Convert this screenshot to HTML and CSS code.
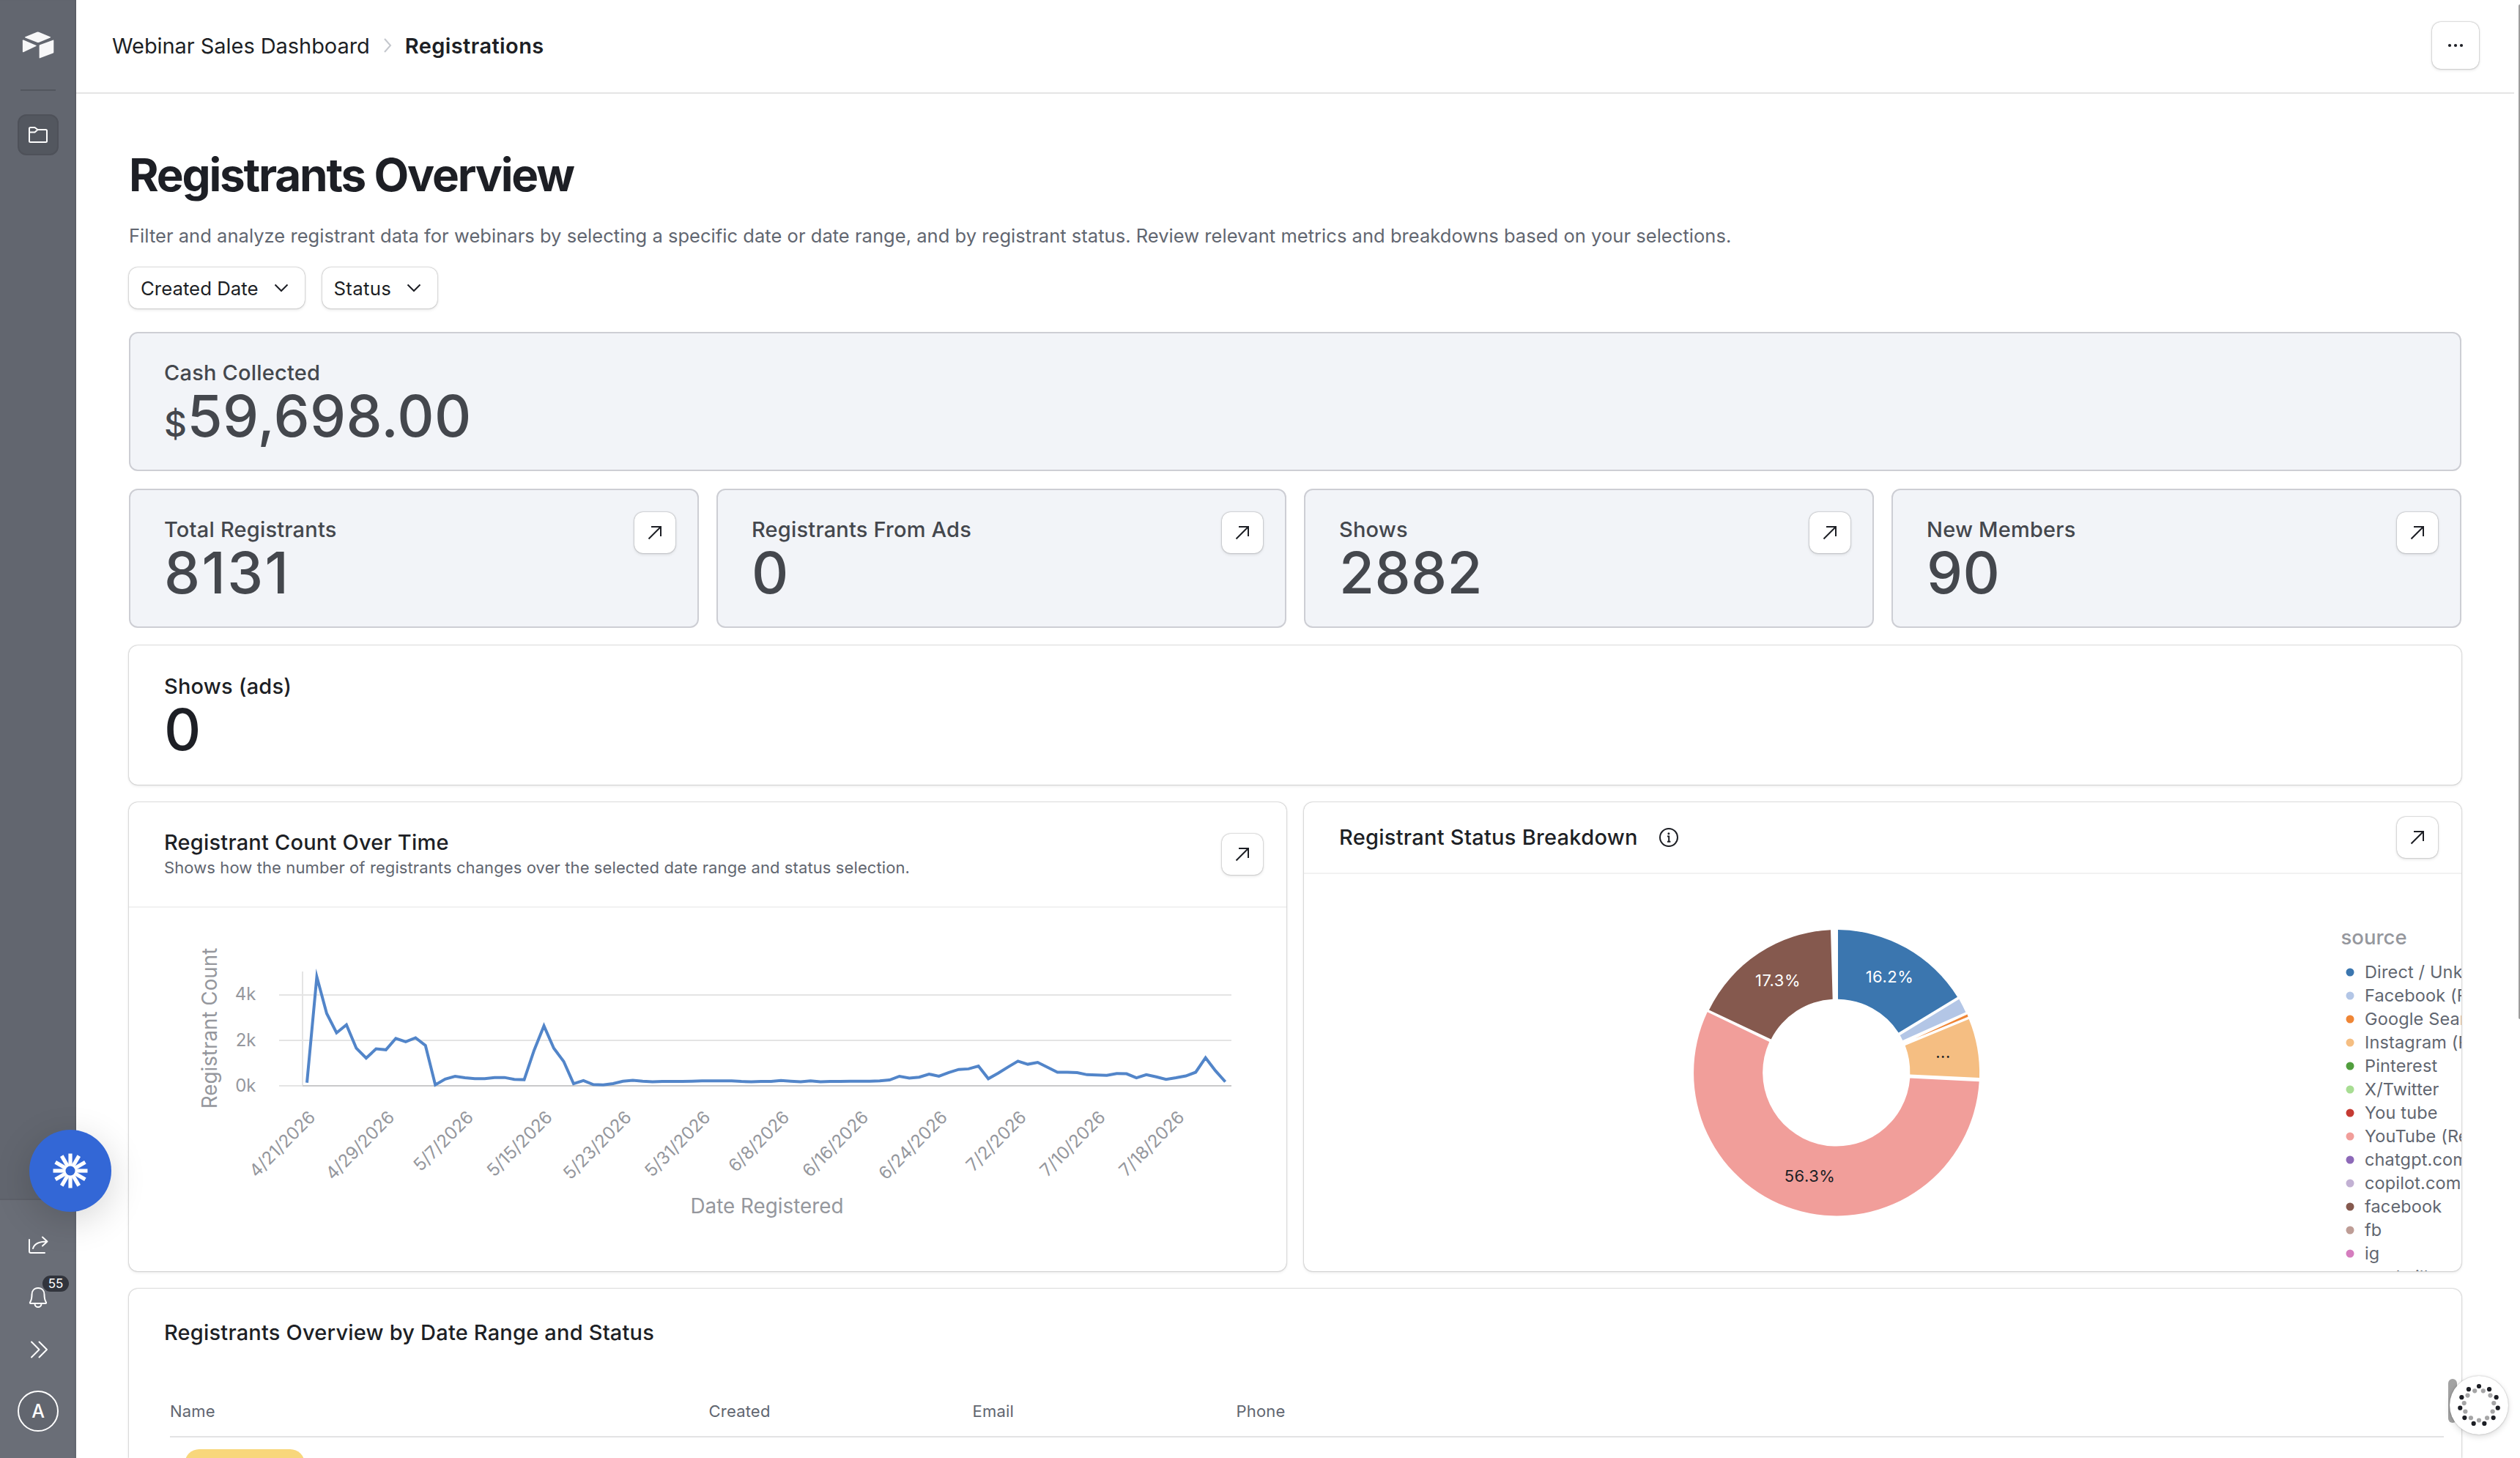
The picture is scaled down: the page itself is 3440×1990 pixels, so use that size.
FILE: index.html
```
<!DOCTYPE html>
<html lang="en">
  <head>
    <meta charset="UTF-8" />
    <meta name="viewport" content="width=device-width, initial-scale=1.0" />
    <title>Registrations - Webinar Sales Dashboard</title>
    <link rel="stylesheet" href="styles.css">
  </head>
  <body>
    <!-- Icons shared by several buttons -->
    <svg class="sprite">
      <symbol id="icon-expand" viewBox="0 0 20 20">
        <path d="M1.5 18.5 L17.5 2.5 M5 2 H18 V15" />
      </symbol>
      <symbol id="icon-chevron" viewBox="0 0 20 12">
        <path d="M1.5 1.5 L10 10 L18.5 1.5" />
      </symbol>
    </svg>

    <aside class="sidebar">
      <div class="sidebar-top">
        <svg class="logo" viewBox="0 0 44 38">
          <path d="M20.4 .7 L4.5 7.2 q-1.2 .6 0 1.2 L20.5 14.7 q1.5 .6 3 0 L38.6 8.4 q1.2-.6 0-1.2 L23 .7 q-1.3-.5-2.6 0z" />
          <path d="M23.6 19.2 V35.6 q0 1.2 1.1 .7 L42.6 29.4 q.7-.3 .7-1 V12.4 q0-1.1-1.1-.7 L24.3 18.3 q-.7 .3-.7 .9z" />
          <path d="M19.4 19 L2 11.6 Q.9 11.2 .9 12.3 V27.6 q0 1 1 .6 L19.3 20 q1-.5 .1-1z" />
        </svg>
        <div class="sidebar-divider"></div>
        <button class="folder-btn">
          <svg class="line-icon" width="28" height="24" viewBox="0 0 28 24">
            <path d="M2 20.5 V3.5 Q2 2 3.5 2 H9.5 L13.5 5 H24.5 Q26 5 26 6.5 V20.5 Q26 22 24.5 22 H3.5 Q2 22 2 20.5z M2 8.5 H9.5 L13.5 5" />
          </svg>
        </button>
      </div>

      <div class="sidebar-bottom">
        <svg class="line-icon" width="28" height="26" viewBox="0 0 28 26">
          <path d="M2 6 V22 Q2 24 4 24 H23 M7 18 C9 11 15 8.5 26 8.5 M20 2.5 L26.5 8.5 L20 14.5" />
        </svg>
        <div class="bell">
          <svg class="line-icon" width="26" height="30" viewBox="0 0 26 30">
            <path d="M13 2 C7.5 2 4.5 6 4.5 11 C4.5 17 3 20 2 21.5 Q1.5 23 3 23 H23 Q24.5 23 24 21.5 C23 20 21.5 17 21.5 11 C21.5 6 18.5 2 13 2z M8.5 23.5 a4.5 4.5 0 0 0 9 0" />
          </svg>
          <span class="badge">55</span>
        </div>
        <svg class="line-icon double-chevron" width="26" height="26" viewBox="0 0 26 26">
          <path d="M3 2.5 L13.5 13 L3 23.5 M13.5 2.5 L24 13 L13.5 23.5" />
        </svg>
        <div class="avatar">A</div>
      </div>
    </aside>

    <div class="page">
      <header class="topbar">
        <div class="breadcrumb">
          <span>Webinar Sales Dashboard</span>
          <svg width="12" height="20" viewBox="0 0 12 20"><path d="M2 1 L10 10 L2 19" /></svg>
          <strong>Registrations</strong>
        </div>
        <button class="icon-btn more-btn">
          <svg width="24" height="6" viewBox="0 0 24 6">
            <circle cx="4" cy="3" r="2.1" /><circle cx="12" cy="3" r="2.1" /><circle cx="20" cy="3" r="2.1" />
          </svg>
        </button>
      </header>

      <main class="content">
        <h1>Registrants Overview</h1>
        <p class="intro">Filter and analyze registrant data for webinars by selecting a specific date or date range, and by registrant status. Review relevant metrics and breakdowns based on your selections.</p>

        <div class="filters">
          <button class="filter-btn">Created Date <svg><use href="#icon-chevron" /></svg></button>
          <button class="filter-btn status">Status <svg><use href="#icon-chevron" /></svg></button>
        </div>

        <div class="cards">
          <section class="card kpi tinted full">
            <div>
              <h2>Cash Collected</h2>
              <div class="number"><span class="currency">$</span>59,698.00</div>
            </div>
          </section>

          <section class="card kpi tinted">
            <div>
              <h2>Total Registrants</h2>
              <div class="number wide">8131</div>
            </div>
            <button class="icon-btn"><svg><use href="#icon-expand" /></svg></button>
          </section>
          <section class="card kpi tinted">
            <div>
              <h2>Registrants From Ads</h2>
              <div class="number">0</div>
            </div>
            <button class="icon-btn"><svg><use href="#icon-expand" /></svg></button>
          </section>
          <section class="card kpi tinted">
            <div>
              <h2>Shows</h2>
              <div class="number">2882</div>
            </div>
            <button class="icon-btn"><svg><use href="#icon-expand" /></svg></button>
          </section>
          <section class="card kpi tinted">
            <div>
              <h2>New Members</h2>
              <div class="number">90</div>
            </div>
            <button class="icon-btn"><svg><use href="#icon-expand" /></svg></button>
          </section>

          <section class="card kpi full">
            <div>
              <h2>Shows (ads)</h2>
              <div class="number">0</div>
            </div>
          </section>

          <section class="card chart half">
            <div class="chart-head tall">
              <div>
                <h2>Registrant Count Over Time</h2>
                <p>Shows how the number of registrants changes over the selected date range and status selection.</p>
              </div>
              <button class="icon-btn"><svg><use href="#icon-expand" /></svg></button>
            </div>
            <svg width="1580" height="496" viewBox="0 0 1580 496">
              <path class="grid" d="M205 119 H1505 M205 181 H1505 M205 243 H237 M237 87 V243" />
              <path class="axis" d="M237 243 H1505" />
              <text class="tick" x="173.5" y="126" text-anchor="end">4k</text>
              <text class="tick" x="173.5" y="188.5" text-anchor="end">2k</text>
              <text class="tick" x="173.5" y="250.5" text-anchor="end">0k</text>
              <g id="date-labels"></g>
              <polyline id="count-line" points="" />
              <text class="axis-title" transform="translate(119.5 164.5) rotate(-90)" text-anchor="middle">Registrant Count</text>
              <text class="axis-title" x="871" y="417" text-anchor="middle">Date Registered</text>
            </svg>
          </section>

          <section class="card chart half">
            <div class="chart-head">
              <div class="with-info">
                <h2>Registrant Status Breakdown</h2>
                <svg class="info" width="28" height="28" viewBox="0 0 28 28">
                  <circle cx="14" cy="14" r="12" />
                  <path d="M12 12.5 H14.2 V19.5 M12 19.7 H16.4" />
                  <circle class="dot" cx="13.9" cy="8.7" r="1.5" />
                </svg>
              </div>
              <button class="icon-btn"><svg><use href="#icon-expand" /></svg></button>
            </div>
            <svg width="1580" height="542" viewBox="0 0 1580 542">
              <path fill="#3b76af" d="M729 76 A195 195 0 0 1 892 167.8 L811.7 216.4 A100.7 100.7 0 0 0 729 170.7z" />
              <path fill="#b3c6e6" d="M894.3 170.7 A195 195 0 0 1 903.3 188.6 L817.3 227 A100.7 100.7 0 0 0 813.7 220z" />
              <path fill="#ef8636" d="M905.5 191.5 L906.6 194.8 L834 224.6z" />
              <path fill="#f5be82" d="M907.7 198 A195 195 0 0 1 922 278 L827.3 273.5 A100.7 100.7 0 0 0 820.7 234z" />
              <path fill="#f19e9a" d="M921.7 283.3 A195 195 0 1 1 550.7 188.2 L635.3 229 A100.7 100.7 0 1 0 827.3 278.4z" />
              <path fill="#85594e" d="M553 185.4 A195 195 0 0 1 719 76.2 L721.7 170.7 A100.7 100.7 0 0 0 637.7 225.4z" />
              <g class="slice-labels" text-anchor="middle">
                <text class="light" x="799.5" y="147.5">16.2%</text>
                <text class="light" x="647" y="152.5">17.3%</text>
                <text x="690.5" y="419.5">56.3%</text>
                <text x="872.5" y="251">...</text>
              </g>
              <text class="legend-title" x="1415.5" y="95.5">source</text>
              <g id="legend"></g>
            </svg>
          </section>

          <section class="card table-card full">
            <h2>Registrants Overview by Date Range and Status</h2>
            <div class="table-head">
              <span>Name</span>
              <span>Created</span>
              <span>Email</span>
              <span>Phone</span>
            </div>
            <div class="pill"></div>
          </section>
        </div>
      </main>
    </div>

    <div class="page-scroll"></div>
    <div class="table-scroll"></div>

    <!-- Floating widgets -->
    <div class="assistant">
      <svg id="burst" width="112" height="112" viewBox="-56 -56 112 112"></svg>
    </div>
    <div class="help">
      <svg id="help-dots" width="80" height="80" viewBox="-40 -40 80 80"></svg>
    </div>

    <script src="charts.js"></script>
  </body>
</html>
```
FILE: styles.css
```
/* General */
* {
  box-sizing: border-box;
}

body {
  margin: 0;
  height: 100vh;
  overflow: hidden;
  display: flex;
  background: #fff;
  color: #1d1f25;
  font-family: Inter, "Liberation Sans", sans-serif;
}

h1,
h2,
p {
  margin: 0;
}

button {
  font: inherit;
  color: inherit;
  border: none;
  padding: 0;
  background: #fff;
  cursor: pointer;
}

svg {
  display: block;
  flex: none;
}

.sprite {
  position: absolute;
  width: 0;
  height: 0;
}

/* Sidebar */
.sidebar {
  width: 104px;
  flex: none;
  display: flex;
  flex-direction: column;
  justify-content: space-between;
  background: #62666f;
  box-shadow: inset -2px 0 2px -1px rgba(0, 0, 0, 0.15);
}

.sidebar-top,
.sidebar-bottom {
  display: flex;
  flex-direction: column;
  align-items: center;
}

.sidebar-top {
  padding-top: 43px;
}

.logo {
  width: 44px;
  height: 38px;
  fill: #f7f7f8;
}

.sidebar-divider {
  width: 48px;
  height: 2px;
  margin: 41px 0 32px;
  background: #53565e;
}

.folder-btn {
  width: 56px;
  height: 56px;
  display: flex;
  align-items: center;
  justify-content: center;
  background: #53575f;
  border: 2px solid #4e5159;
  border-radius: 12px;
}

.line-icon {
  fill: none;
  stroke: #fff;
  stroke-width: 2;
  stroke-linecap: round;
  stroke-linejoin: round;
}

.sidebar-bottom {
  height: 354px;
  padding-top: 48px;
  background: linear-gradient(90deg, #6a6e77 100px, #62666f);
  border-top: 2px solid #5d6069;
}

.bell {
  position: relative;
  margin-top: 44px;
}

.badge {
  position: absolute;
  left: 19px;
  top: -15px;
  width: 36px;
  height: 22px;
  line-height: 22px;
  border-radius: 11px;
  background: #31343c;
  color: #fff;
  font-size: 17px;
  text-align: center;
}

.double-chevron {
  margin: 43px -2px 0 0;
}

.avatar {
  width: 56px;
  height: 56px;
  margin-top: 43px;
  line-height: 52px;
  border: 2px solid #fff;
  border-radius: 50%;
  background: #62666f;
  color: #fff;
  font-size: 25px;
  font-weight: 500;
  text-align: center;
}

/* Top bar */
.page {
  flex: 1;
  min-width: 0;
}

.topbar {
  height: 128px;
  margin-right: 8px;
  padding: 0 48px 2px 49px;
  display: flex;
  align-items: center;
  justify-content: space-between;
  border-bottom: 2px solid #e5e5e5;
}

.breadcrumb {
  display: flex;
  align-items: center;
  font-size: 29px;
  letter-spacing: -0.06px;
}

.breadcrumb svg {
  margin: 0 18px;
  fill: none;
  stroke: #c4c7cd;
  stroke-width: 2;
}

.breadcrumb strong {
  font-weight: 600;
  letter-spacing: 0.4px;
}

.icon-btn {
  width: 56px;
  height: 56px;
  flex: none;
  display: flex;
  align-items: center;
  justify-content: center;
  border-radius: 12px;
  box-shadow: 0 0 2px rgba(0, 0, 0, 0.45), 0 2px 4px rgba(0, 0, 0, 0.1);
}

.icon-btn svg {
  width: 20px;
  height: 20px;
  fill: none;
  stroke: #1d1f25;
  stroke-width: 2;
}

.more-btn {
  width: 64px;
  height: 64px;
}

.more-btn svg {
  width: 24px;
  height: 6px;
  fill: #1d1f25;
  stroke: none;
}

/* Content */
.content {
  padding: 71px 80px 0 72px;
}

h1 {
  font-size: 62px;
  line-height: 80px;
  letter-spacing: -2.2px;
}

.intro {
  margin-top: 23px;
  font-size: 25.5px;
  line-height: 40px;
  letter-spacing: 0.036px;
  color: #616670;
  white-space: nowrap;
}

.filters {
  display: flex;
  gap: 24px;
  margin: 23px 0 32px;
}

.filter-btn {
  height: 56px;
  padding: 0 22px 0 16px;
  display: flex;
  align-items: center;
  gap: 21px;
  border-radius: 12px;
  font-size: 25.8px;
  box-shadow: 0 0 2px rgba(0, 0, 0, 0.45), 0 2px 4px rgba(0, 0, 0, 0.1);
}

.status {
  letter-spacing: 0.3px;
}

.filter-btn svg {
  width: 20px;
  height: 12px;
  fill: none;
  stroke: #1d1f25;
  stroke-width: 2;
}

/* Cards */
.cards {
  display: grid;
  grid-template-columns: repeat(4, 1fr);
  gap: 24px;
}

.card {
  background: #fff;
  border-radius: 12px;
  box-shadow: 0 0 2px rgba(0, 0, 0, 0.45), 0 2px 4px rgba(0, 0, 0, 0.08);
}

.card h2 {
  font-size: 29px;
  font-weight: 500;
  letter-spacing: 0.2px;
}

.full {
  grid-column: span 4;
}

.half {
  grid-column: span 2;
}

.kpi {
  height: 190px;
  padding: 36px 32px 0 48px;
  display: flex;
  justify-content: space-between;
}

.kpi h2 {
  line-height: 40px;
}

.kpi .icon-btn {
  margin-top: -4px;
}

.tinted {
  padding: 34px 30px 0 46px;
  background: #f2f4f8;
  border: 2px solid #cdced4;
  box-shadow: none;
  color: #44474d;
}

.number {
  margin-top: -1px;
  font-size: 78px;
  line-height: 80px;
  font-weight: 500;
  letter-spacing: 0.4px;
}

.wide {
  letter-spacing: 2.4px;
}

.currency {
  font-size: 48px;
}

/* Charts */
.chart {
  height: 640px;
  overflow: hidden;
}

.chart-head {
  height: 98px;
  padding: 0 32px 0 48px;
  display: flex;
  align-items: center;
  justify-content: space-between;
  border-bottom: 2px solid #f2f2f2;
}

.tall {
  height: 144px;
}

.chart-head h2 {
  line-height: 36px;
}

.chart-head p {
  font-size: 22px;
  line-height: 32px;
  letter-spacing: 0.1px;
  color: #616670;
}

.with-info {
  display: flex;
  align-items: center;
  gap: 28px;
}

.info {
  fill: none;
  stroke: #1d1f25;
  stroke-width: 2;
}

.with-info h2 {
  letter-spacing: 0.28px;
}

.info .dot {
  fill: #1d1f25;
  stroke: none;
}

.grid,
.axis {
  fill: none;
  stroke: #e4e4e4;
  stroke-width: 2;
}

.axis {
  stroke: #c9c9ca;
}

#count-line {
  fill: none;
  stroke: #5285c9;
  stroke-width: 4;
  stroke-miterlimit: 10;
}

.tick,
.date-tick {
  font-size: 24px;
  fill: #95979d;
}

.date-tick {
  letter-spacing: -0.1px;
}

.axis-title {
  font-size: 27.8px;
  fill: #95979d;
}

.slice-labels {
  font-size: 22px;
  letter-spacing: 0.5px;
  fill: #1d1f25;
}

.slice-labels .light {
  fill: #fff;
}

.legend-title {
  font-size: 27.5px;
  font-weight: 500;
  fill: #95979d;
}

#legend text {
  font-size: 23.5px;
  letter-spacing: 0.15px;
  fill: #616670;
}

/* Table */
.table-card {
  height: 231px;
  padding: 42px 24px 0 56px;
  border-radius: 12px 12px 0 0;
  overflow: hidden;
}

.table-card h2 {
  margin-left: -8px;
  line-height: 36px;
}

.table-head {
  display: grid;
  grid-template-columns: 735.5px 360px 360px 1fr;
  padding: 73px 0 18px;
  border-bottom: 2px solid #e3e3e4;
  font-size: 22px;
  letter-spacing: 0.2px;
  line-height: 32px;
  color: #616670;
}

.pill {
  width: 164px;
  height: 40px;
  margin: 16px 0 0 20px;
  border-radius: 20px;
  background: #f8d77b;
}

/* Scrollbars */
.table-scroll {
  position: absolute;
  bottom: 48px;
  right: 86px;
  width: 12px;
  height: 60px;
  border-radius: 6px;
  background: #a3a3a3;
}

.page-scroll {
  position: absolute;
  top: 6px;
  right: 0;
  width: 2px;
  height: 1385px;
  border-radius: 2px 0 0 2px;
  background: #9d9d9d;
}

/* Floating widgets */
.assistant,
.help {
  position: absolute;
  border-radius: 50%;
}

.assistant {
  left: 40px;
  bottom: 336px;
  width: 112px;
  height: 112px;
  background: #3367d6;
  box-shadow: 0 12px 50px rgba(0, 0, 0, 0.16);
}

.assistant line {
  stroke: #fff;
  stroke-width: 5.2;
}

.assistant circle {
  fill: #3367d6;
}

.help {
  right: 16px;
  bottom: 32px;
  width: 80px;
  height: 80px;
  background: #fff;
  box-shadow: 0 0 2px rgba(0, 0, 0, 0.3), 0 3px 8px rgba(0, 0, 0, 0.14);
}
```
FILE: charts.js
```
const SVG = "http://www.w3.org/2000/svg";

function add(parent, tag, attrs, text) {
  const el = document.createElementNS(SVG, tag);
  for (const key in attrs) el.setAttribute(key, attrs[key]);
  if (text) el.textContent = text;
  parent.appendChild(el);
}

// Registrants per day, starting 4/21/2026
const counts = [
  136, 4800, 3187, 2332, 2685, 1654, 1220, 1627, 1587, 2088, 1939, 2115, 1776,
  41, 298, 420, 353, 312, 312, 366, 366, 285, 271, 1560, 2640, 1654, 1071, 95,
  231, 54, 41, 95, 203, 244, 203, 176, 190, 190, 190, 203, 217, 217, 217, 217,
  190, 176, 190, 190, 231, 203, 176, 217, 176, 190, 190, 203, 203, 203, 217,
  258, 420, 339, 380, 515, 420, 583, 719, 746, 868, 312, 556, 827, 1085, 949,
  1031, 814, 597, 597, 583, 488, 475, 461, 542, 529, 353, 488, 393, 285, 353,
  434, 597, 1234, 664, 176,
];
const startX = 243;
const dayWidth = 13.48;
const zeroY = 243;

document.getElementById("count-line").setAttribute(
  "points",
  counts.map((n, i) => `${startX + i * dayWidth},${zeroY - n * 0.031}`).join(" ")
);

// One date label every 8 days
const dates = [
  "4/21/2026", "4/29/2026", "5/7/2026", "5/15/2026", "5/23/2026", "5/31/2026",
  "6/8/2026", "6/16/2026", "6/24/2026", "7/2/2026", "7/10/2026", "7/18/2026",
];
dates.forEach((date, i) => {
  const x = startX + 13 + i * 8 * dayWidth;
  add(document.getElementById("date-labels"), "text", {
    class: "date-tick",
    "text-anchor": "end",
    transform: `translate(${x} 287.5) rotate(-45)`,
  }, date);
});

// Donut legend
const sources = [
  ["Direct / Unknown", "#3b76af"],
  ["Facebook (Retargeting)", "#b3c6e6"],
  ["Google Search", "#ef8636"],
  ["Instagram (Reels)", "#f5be82"],
  ["Pinterest", "#519e3e"],
  ["X/Twitter", "#a8dd93"],
  ["You tube", "#c53a32"],
  ["YouTube (Retargeting)", "#f19e9a"],
  ["chatgpt.com", "#8d69b8"],
  ["copilot.com", "#c2b1d3"],
  ["facebook", "#85594e"],
  ["fb", "#be9d96"],
  ["ig", "#d57dbe"],
  ["madstill", "#f0b8d1"],
];
sources.forEach(([name, color], i) => {
  const legend = document.getElementById("legend");
  add(legend, "circle", { cx: 1428, cy: 134 + i * 32, r: 5.5, fill: color });
  add(legend, "text", { x: 1448, y: 141.5 + i * 32 }, name);
});

// Assistant icon
const burst = document.getElementById("burst");
for (let i = 0; i < 12; i++) {
  add(burst, "line", { x1: 0, y1: 6, x2: 0, y2: 23.5, transform: `rotate(${i * 30})` });
}
add(burst, "circle", { r: 6.5 });

// Help icon: two rings of 11 dots
const help = document.getElementById("help-dots");
for (let i = 0; i < 11; i++) {
  const a = (i * 2 * Math.PI) / 11;
  add(help, "circle", { cx: 20.5 * Math.sin(a), cy: 20.5 * Math.cos(a), r: 3.1, fill: "#a5a5a6" });
  add(help, "circle", { cx: 26 * Math.sin(a), cy: -26 * Math.cos(a), r: 3.1, fill: "#1d1f25" });
}
```
